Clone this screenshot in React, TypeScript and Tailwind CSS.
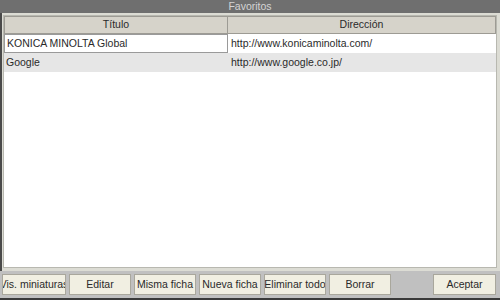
import React from "react";

const rows = [
  { t: "KONICA MINOLTA Global", d: "http://www.konicaminolta.com/", bg: "bg-white", sel: true },
  { t: "Google", d: "http://www.google.co.jp/", bg: "bg-[#e6e6e6]", sel: false },
];

const buttons = [
  { label: "Vis. miniaturas", w: "w-[64px]" },
  { label: "Editar", w: "w-[62px]" },
  { label: "Misma ficha", w: "w-[62px]" },
  { label: "Nueva ficha", w: "w-[62px]" },
  { label: "Eliminar todo", w: "w-[62px]" },
  { label: "Borrar", w: "w-[62px]" },
];

function Btn({ label, w }: { label: string; w: string }) {
  return (
    <div
      className={`${w} h-[21px] flex items-center justify-center overflow-hidden whitespace-nowrap bg-[#f1efe2] border border-[#a9a79c] text-[10.5px] text-[#2a2a2a]`}
    >
      {label}
    </div>
  );
}

export default function App() {
  return (
    <div
      className="w-[500px] h-[300px] flex flex-col bg-[#c3c3c3] overflow-hidden"
      style={{ fontFamily: '"Liberation Sans", Arial, sans-serif' }}
    >
      <div className="h-[13px] bg-[#6f6f6f] flex items-center justify-center text-[10.5px] leading-none text-[#d4d4d4]">
        Favoritos
      </div>
      <div className="flex-1 flex flex-col bg-[#dcdcd4] border-l-[2px] border-[#4a4a4a] pl-[1px] pr-[3px] pt-[2px] pb-[3px]">
        <div className="flex-1 flex flex-col bg-white border border-[#b8b8b0]">
          <div className="flex h-[18px] bg-[#d6d3ca]">
            <div className="w-[224px] flex items-center justify-center border border-[#9d9b94] text-[10.5px] text-[#2a2a2a]">
              Título
            </div>
            <div className="flex-1 flex items-center justify-center border border-[#9d9b94] border-l-0 text-[10.5px] text-[#2a2a2a]">
              Dirección
            </div>
          </div>
          {rows.map((r) => (
            <div key={r.t} className={`flex h-[19px] ${r.bg}`}>
              <div
                className={`w-[224px] flex items-center pl-[2px] text-[10.5px] text-[#2a2a2a] ${
                  r.sel ? "border border-[#9a9a9a]" : ""
                }`}
              >
                {r.t}
              </div>
              <div className="flex-1 flex items-center pl-[3px] text-[10.5px] text-[#2a2a2a]">{r.d}</div>
            </div>
          ))}
        </div>
      </div>
      <div className="h-[29px] flex items-center bg-[#c0c0c0] border-b-[2px] border-[#3a3a3a] pl-[2px] pr-[4px] gap-[3px]">
        {buttons.map((b) => (
          <Btn key={b.label} label={b.label} w={b.w} />
        ))}
        <div className="flex-1" />
        <Btn label="Aceptar" w="w-[63px]" />
      </div>
    </div>
  );
}
